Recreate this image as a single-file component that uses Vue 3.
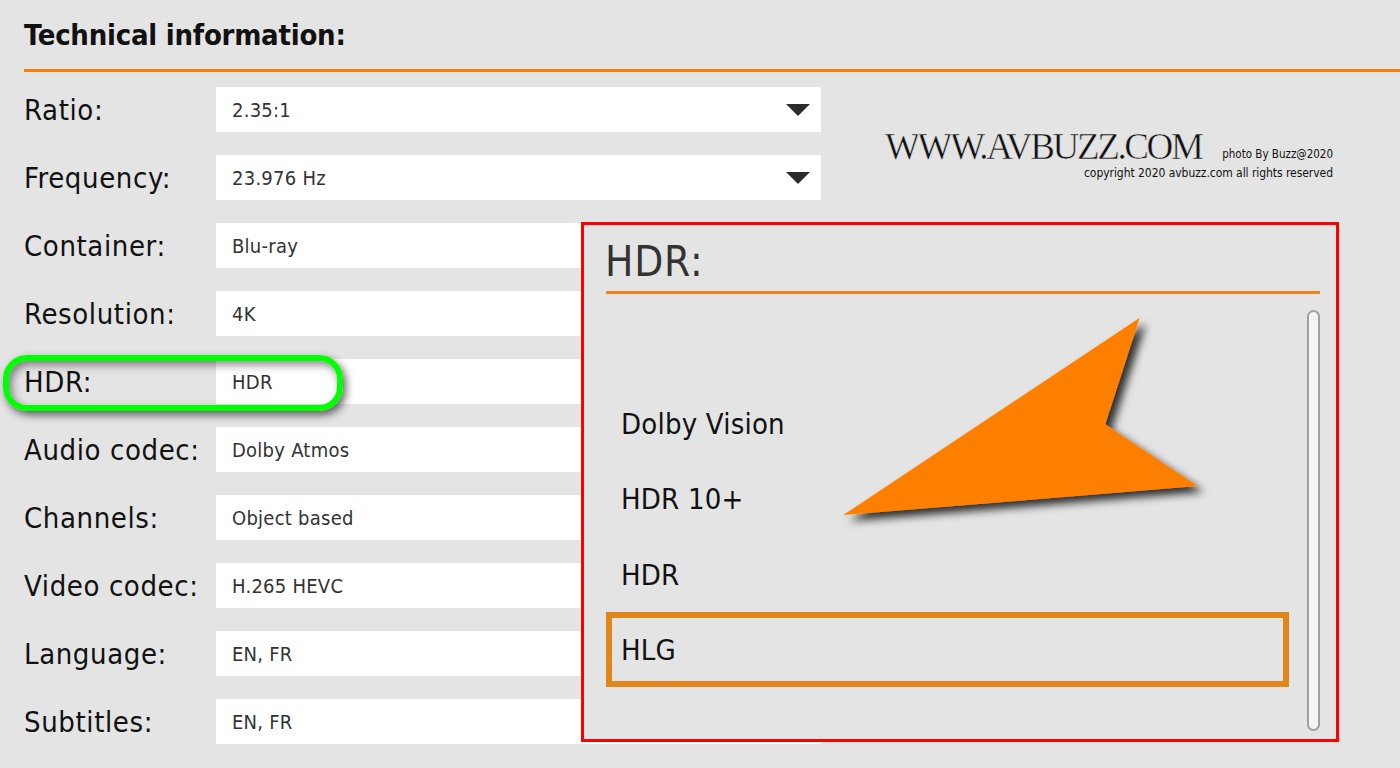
<template>
  <div class="page">
    <h1 class="title">Technical information:</h1>

    <div class="rows">
      <div v-for="row in rows" :key="row.label" class="row">
        <span class="label">{{ row.label }}</span>
        <div class="value">
          <span>{{ row.value }}</span>
          <i v-if="row.caret" class="caret"></i>
        </div>
      </div>
    </div>

    <!-- 右上浮水印 -->
    <div class="credit">
      <div class="credit-top">
        <span class="logo">WWW.AVBUZZ.COM</span>
        <span class="photo">photo By Buzz@2020</span>
      </div>
      <div class="copyright">copyright 2020 avbuzz.com all rights reserved</div>
    </div>

    <!-- 綠色標記 -->
    <div class="highlight"></div>

    <!-- HDR 選單 -->
    <div class="popup">
      <div class="popup-title">HDR:</div>
      <div class="popup-body">
        <div class="options">
          <div
            v-for="opt in options"
            :key="opt"
            class="option"
            :class="{ selected: opt === selected }"
          >
            {{ opt }}
          </div>
        </div>
        <div class="scrollbar"></div>
      </div>
    </div>

    <!-- 箭頭 -->
    <svg class="arrow" width="1400" height="768" viewBox="0 0 1400 768">
      <defs>
        <filter id="arrow-shadow" x="-10%" y="-10%" width="125%" height="130%">
          <feDropShadow dx="6" dy="6" stdDeviation="4" flood-color="#000" flood-opacity="0.8" />
        </filter>
      </defs>
      <polygon
        points="1139.7,317.7 1105.3,424.3 1197.7,486 843.3,515"
        fill="#ff8000"
        filter="url(#arrow-shadow)"
      />
    </svg>
  </div>
</template>

<script setup>
const rows = [
  { label: 'Ratio:', value: '2.35:1', caret: true },
  { label: 'Frequency:', value: '23.976 Hz', caret: true },
  { label: 'Container:', value: 'Blu-ray' },
  { label: 'Resolution:', value: '4K' },
  { label: 'HDR:', value: 'HDR' },
  { label: 'Audio codec:', value: 'Dolby Atmos' },
  { label: 'Channels:', value: 'Object based' },
  { label: 'Video codec:', value: 'H.265 HEVC' },
  { label: 'Language:', value: 'EN, FR' },
  { label: 'Subtitles:', value: 'EN, FR' },
]

const options = ['Dolby Vision', 'HDR 10+', 'HDR', 'HLG']
const selected = 'HLG'
</script>

<style>
html,
body {
  margin: 0;
  background: #e4e4e4;
  overflow: hidden;
}
</style>

<style scoped>
.page {
  position: relative;
  width: 1400px;
  height: 768px;
  overflow: hidden;
  background: #e4e4e4;
  color: #111;
  font-family: "DejaVu Sans Condensed", "DejaVu Sans", sans-serif;
  font-stretch: condensed;
}

.title {
  margin: 0 0 15px 24px;
  height: 69px;
  border-bottom: 3px solid #fa7f0a;
  font-size: 29px;
  font-weight: 700;
  line-height: 71px;
  letter-spacing: -0.25px;
}

.rows {
  display: flex;
  flex-direction: column;
  gap: 23px;
}

.row {
  display: flex;
  align-items: center;
  height: 45px;
  padding-left: 24px;
}

.label {
  width: 192px;
  font-size: 29px;
  letter-spacing: 0.6px;
}

.value {
  width: 605px;
  height: 45px;
  box-sizing: border-box;
  padding: 0 11px 0 16px;
  display: flex;
  align-items: center;
  justify-content: space-between;
  background: #fff;
  color: #333;
  font-size: 20px;
  letter-spacing: 0.25px;
}

.caret {
  width: 0;
  height: 0;
  border-left: 12px solid transparent;
  border-right: 12px solid transparent;
  border-top: 12px solid #2b2b2b;
}

.credit {
  position: absolute;
  left: 885px;
  top: 128px;
  width: 448px;
}

.credit-top {
  display: flex;
  justify-content: space-between;
  align-items: flex-end;
  height: 36px;
}

.logo {
  margin-bottom: -3px;
  font-family: "Liberation Serif", serif;
  font-stretch: normal;
  font-size: 37px;
  line-height: 40px;
  color: #111;
  letter-spacing: -2.35px;
  white-space: nowrap;
  -webkit-text-stroke: 0.5px #e4e4e4;
}

.photo {
  font-size: 11.5px;
  line-height: 15px;
  padding-bottom: 2px;
  white-space: nowrap;
}

.copyright {
  margin-top: 1px;
  font-size: 12px;
  line-height: 16px;
  letter-spacing: -0.05px;
  text-align: right;
}

.highlight {
  position: absolute;
  left: 3px;
  top: 355px;
  width: 340px;
  height: 56px;
  box-sizing: border-box;
  border: 6px solid #00ff00;
  border-radius: 24px;
  box-shadow: 3px 4px 8px rgba(0, 0, 0, 0.6), inset 3px 4px 9px rgba(0, 0, 0, 0.45);
}

.popup {
  position: absolute;
  left: 581px;
  top: 222px;
  width: 758px;
  height: 520px;
  box-sizing: border-box;
  border: 3px solid #ff0000;
  background: #e4e4e4;
  padding: 0 16px 0 22px;
}

.popup-title {
  height: 66px;
  border-bottom: 3px solid #f0831c;
  color: #333;
  font-size: 42px;
  line-height: 74px;
  letter-spacing: 0.8px;
  text-indent: -1px;
}

.popup-body {
  display: flex;
  justify-content: space-between;
  padding-top: 16px;
}

.options {
  width: 683px;
  padding-top: 76px;
  box-sizing: border-box;
}

.option {
  height: 75.4px;
  padding-left: 15px;
  font-size: 29px;
  line-height: 77px;
  letter-spacing: 0.2px;
  box-sizing: border-box;
}

.option.selected {
  height: 75px;
  padding-left: 9px;
  border: 6px solid #e0861a;
  line-height: 65px;
}

.scrollbar {
  width: 13px;
  height: 421px;
  box-sizing: border-box;
  border: 2px solid #a0a0a0;
  border-radius: 7px;
  background: #f5f5f5;
}

.arrow {
  position: absolute;
  left: 0;
  top: 0;
  pointer-events: none;
}
</style>
